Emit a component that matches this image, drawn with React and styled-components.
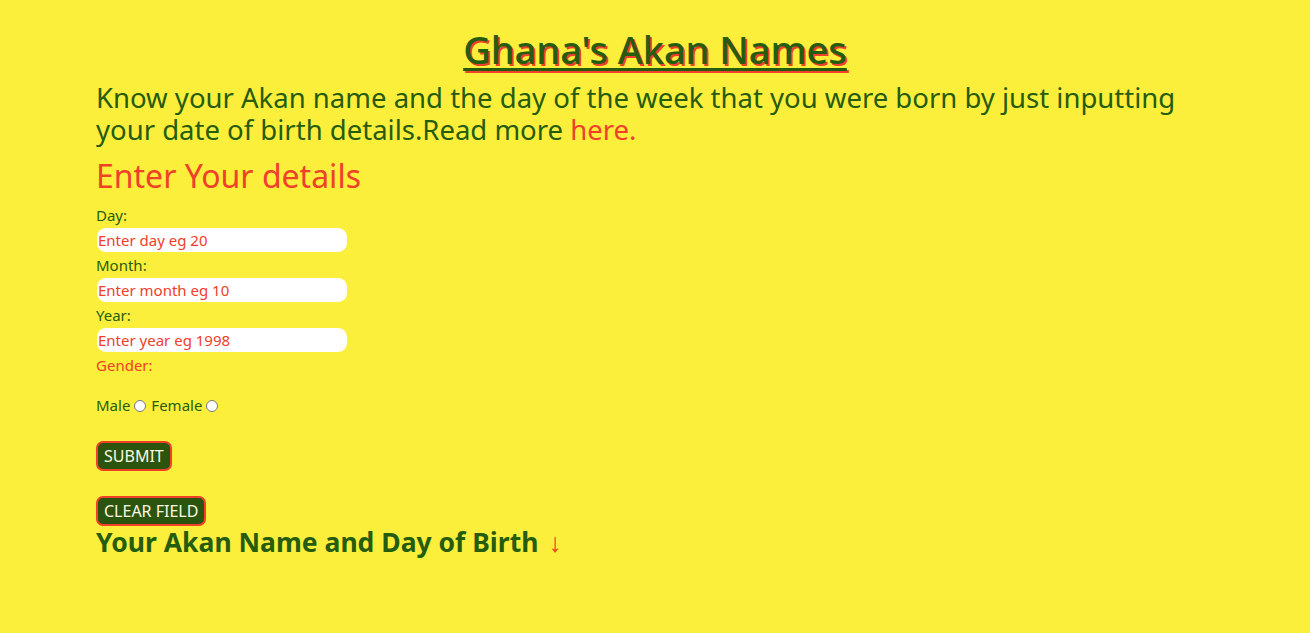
import React, { useState } from "react";
import styled, { createGlobalStyle } from "styled-components";

const GlobalStyle = createGlobalStyle`
  html, body {
    margin: 0;
    padding: 0;
    background: #fbef3b;
  }
  body {
    font-family: "Noto Sans", "Open Sans", sans-serif;
  }
`;

const Page = styled.div`
  padding: 0 96px;
  min-height: 633px;
  box-sizing: border-box;
  color: #265c0e;
`;

const Title = styled.h1`
  margin: 0;
  padding-top: 26px;
  text-align: center;
  font-size: 38px;
  line-height: 46px;
  font-weight: 500;
  text-decoration: underline;
  text-decoration-thickness: 3px;
  text-underline-offset: 4px;
  color: #265c0e;
  text-shadow: 2px 2px 0 #f0402a;
`;

const Intro = styled.p`
  margin: 10px 0 0;
  max-width: 1110px;
  font-size: 27.5px;
  line-height: 32px;
  & a {
    display: inline-block;
    line-height: 32px;
    color: #f0402a;
    text-decoration: none;
  }
`;

const SubTitle = styled.h2`
  margin: 11px 0 8px;
  font-size: 32px;
  line-height: 38px;
  font-weight: 400;
  color: #f0402a;
`;

const Form = styled.form`
  display: flex;
  flex-direction: column;
  align-items: flex-start;
`;

const Label = styled.label`
  display: block;
  font-size: 15px;
  line-height: 24px;
  color: ${(p) => (p.$red ? "#f0402a" : "#265c0e")};
`;

const Input = styled.input`
  box-sizing: border-box;
  width: 252px;
  height: 26px;
  border: 1px solid #fbef3b;
  border-radius: 10px;
  background: #fff;
  padding: 0 1px;
  font-family: inherit;
  font-size: 15px;
  outline: none;
  &::placeholder {
    color: #f0402a;
    opacity: 1;
  }
`;

const RadioRow = styled.div`
  margin-top: 16px;
  display: flex;
  align-items: center;
  font-size: 15px;
  line-height: 24px;
  & input {
    margin: 1px 5px 0 4px;
    width: 12px;
    height: 12px;
  }
`;

const Button = styled.button`
  margin-top: ${(p) => p.$top}px;
  background: #2b550f;
  color: #fdf8e0;
  border: 2px solid #f0402a;
  border-radius: 7px;
  height: 30px;
  padding: 0 6px;
  font-family: inherit;
  font-size: 16px;
  cursor: pointer;
`;

const Result = styled.h3`
  margin: 0;
  font-size: 26.5px;
  line-height: 32px;
  font-weight: 700;
  color: #265c0e;
  & span {
    color: #f0402a;
    font-weight: 400;
    margin-left: 10px;
  }
`;

export default function App() {
  const [gender, setGender] = useState("");
  return (
    <Page>
      <GlobalStyle />
      <Title>Ghana's Akan Names</Title>
      <Intro>
        Know your Akan name and the day of the week that you were born by just
        inputting your date of birth details.Read more <a href="#">here.</a>
      </Intro>
      <SubTitle>Enter Your details</SubTitle>
      <Form onSubmit={(e) => e.preventDefault()}>
        <Label>Day:</Label>
        <Input placeholder="Enter day eg 20" />
        <Label>Month:</Label>
        <Input placeholder="Enter month eg 10" />
        <Label>Year:</Label>
        <Input placeholder="Enter year eg 1998" />
        <Label $red>Gender:</Label>
        <RadioRow>
          Male
          <input
            type="radio"
            name="gender"
            checked={gender === "male"}
            onChange={() => setGender("male")}
          />
          Female
          <input
            type="radio"
            name="gender"
            checked={gender === "female"}
            onChange={() => setGender("female")}
          />
        </RadioRow>
        <Button $top={24} type="submit">SUBMIT</Button>
        <Button $top={25} type="reset">CLEAR FIELD</Button>
      </Form>
      <Result>
        Your Akan Name and Day of Birth<span>↓</span>
      </Result>
    </Page>
  );
}
